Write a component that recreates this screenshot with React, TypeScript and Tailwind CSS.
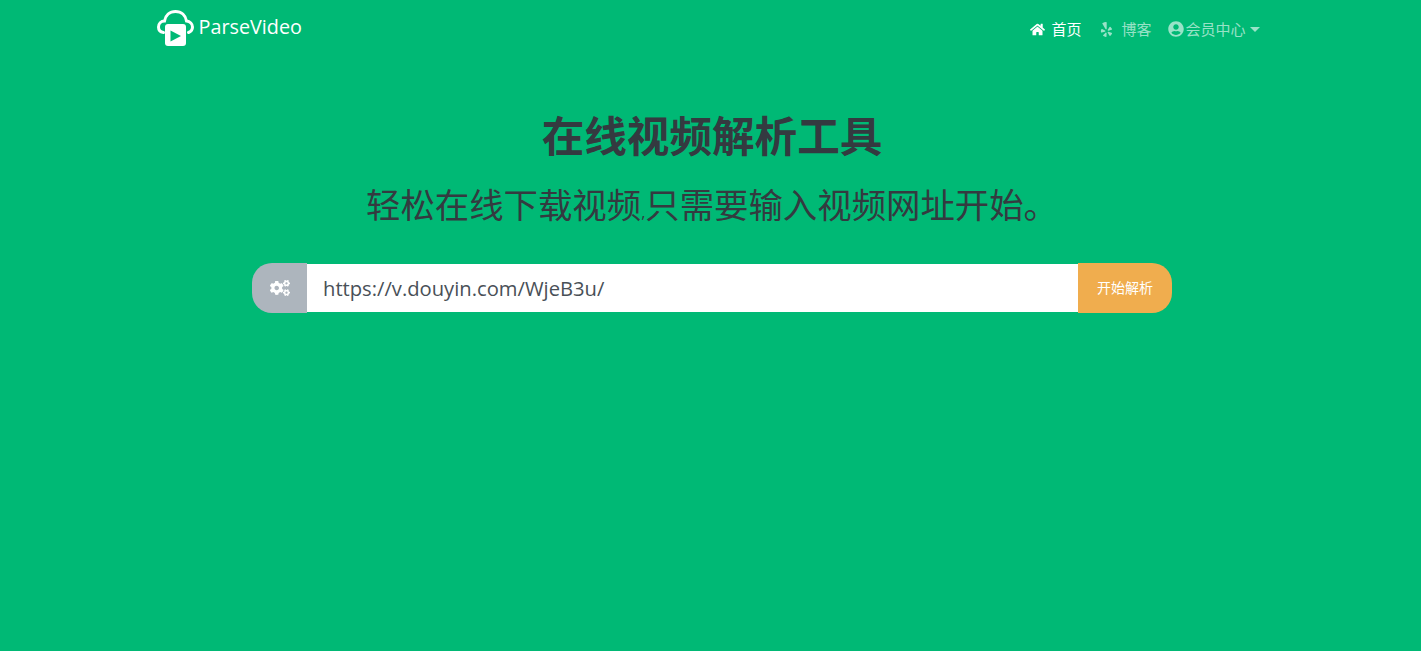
import { FaCogs, FaHome, FaUserCircle, FaYelp } from 'react-icons/fa';

const sans = 'font-["Open_Sans","Noto_Sans_CJK_SC",sans-serif]';

function Logo() {
    return (
        <svg width="37" height="37" viewBox="0 0 37 37" fill="none">
            <path
                d="M6.5 22.5 C3 22 1.5 19.5 1.5 17 C1.5 13.5 4 11 7.5 11 C8.5 5.5 12.5 1.5 18.5 1.5 C24.5 1.5 28.5 5.5 29.5 11 C33 11.5 35.5 14 35.5 17 C35.5 19.5 34 21.5 31.5 22.5"
                stroke="white"
                strokeWidth="3"
                strokeLinecap="round"
            />
            <rect x="8" y="14" width="21" height="22" rx="3" fill="white" />
            <path d="M13.5 20.5 L24 26 L13.5 31.5 Z" fill="#00b975" />
        </svg>
    );
}

export default function App() {
    return (
        <div className={`min-h-[651px] bg-[#00b975] ${sans}`}>
            {/* Navbar */}
            <nav className="mx-auto flex h-[58px] w-[1140px] items-start justify-between pl-[16px] pr-[21px]">
                <a className="mt-[10px] flex items-center gap-[5px] text-white">
                    <Logo />
                    <span className="-mt-[3px] text-[19.8px] leading-[30px]">ParseVideo</span>
                </a>
                <ul className="mt-[18px] flex items-center text-[15px] leading-[22px]">
                    <li className="flex items-center gap-[6px] text-white">
                        <FaHome size={15} />
                        首页
                    </li>
                    <li className="ml-[18px] flex items-center gap-[7px] text-white/60">
                        <FaYelp size={15} />
                        博客
                    </li>
                    <li className="ml-[17px] flex items-center gap-[1px] text-white/60">
                        <FaUserCircle size={16} />
                        会员中心
                        <span className="ml-[3px] h-0 w-0 border-x-[5px] border-t-[5px] border-x-transparent border-t-white/60" />
                    </li>
                </ul>
            </nav>

            {/* Hero */}
            <main className="flex flex-col items-center pl-[3px] text-[#343a40]">
                <h1 className="mt-[52px] text-[42.6px] leading-[50px] font-bold">在线视频解析工具</h1>
                <p className="mt-[24px] text-[34.4px] leading-[41px] whitespace-nowrap">
                    轻松在线下载视频<span className="text-[16px]">,</span>只需要输入视频网址开始。
                </p>

                <div className="mt-[30px] flex h-[50px] w-[920px]">
                    <div className="flex w-[55px] items-center justify-center rounded-l-[20px] bg-[#adb5bd] text-white">
                        <FaCogs size={20} />
                    </div>
                    <div className="flex flex-1 items-center border-y border-[#00b975] bg-white pt-[1px] pl-4 text-[20.2px] text-[#495057]">
                        https://v.douyin.com/WjeB3u/
                    </div>
                    <button className="w-[94px] rounded-r-[20px] bg-[#f0ad4e] text-sm text-white">开始解析</button>
                </div>
            </main>
        </div>
    );
}
